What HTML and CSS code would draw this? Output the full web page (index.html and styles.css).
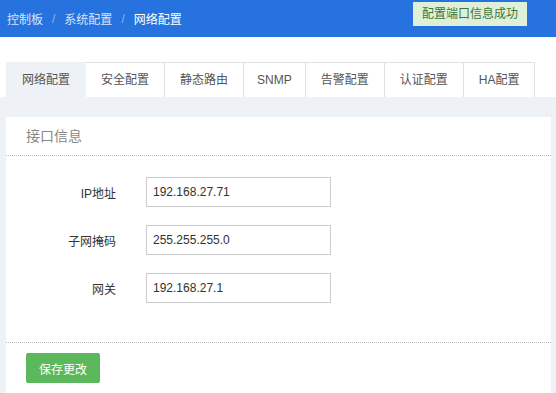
FILE: index.html
```
<!DOCTYPE html>
<html lang="zh-CN">
  <head>
    <meta charset="UTF-8" />
    <meta name="viewport" content="width=device-width, initial-scale=1" />
    <title>网络配置</title>
    <link rel="stylesheet" href="styles.css">
  </head>
  <body>
    <div class="topbar">
      <div class="breadcrumb">
        <span class="crumb">控制板</span>
        <span class="sep">/</span>
        <span class="crumb">系统配置</span>
        <span class="sep">/</span>
        <span class="crumb current">网络配置</span>
      </div>
      <div class="alert-ok">配置端口信息成功</div>
    </div>

    <div class="tabs">
      <div class="tab active">网络配置</div>
      <div class="tab">安全配置</div>
      <div class="tab">静态路由</div>
      <div class="tab tab-short">SNMP</div>
      <div class="tab">告警配置</div>
      <div class="tab">认证配置</div>
      <div class="tab">HA配置</div>
    </div>

    <div class="tab-content">
      <div class="panel">
        <div class="panel-title">接口信息</div>
        <div class="panel-body">
          <div class="form-row">
            <label for="ip">IP地址</label>
            <input type="text" id="ip" value="192.168.27.71" />
          </div>
          <div class="form-row">
            <label for="mask">子网掩码</label>
            <input type="text" id="mask" value="255.255.255.0" />
          </div>
          <div class="form-row">
            <label for="gw">网关</label>
            <input type="text" id="gw" value="192.168.27.1" />
          </div>
        </div>
        <div class="panel-footer">
          <button class="btn-save">保存更改</button>
        </div>
      </div>
    </div>
  </body>
</html>
```

FILE: styles.css
```
body {
  margin: 0;
  padding: 0;
  font-family: "Liberation Sans", "Noto Sans CJK SC", sans-serif;
  font-size: 12px;
  color: #333;
  background-color: #fff;
}

.topbar {
  height: 37px;
  background-color: #2672de;
  display: flex;
  align-items: center;
  padding: 0 7px;
}

.breadcrumb {
  display: flex;
  align-items: center;
  color: #d6e4fa;
  font-size: 12px;
}

.sep {
  color: #8fb3ee;
  margin: 0 9px;
}

.crumb.current {
  color: #fff;
}

.alert-ok {
  margin-left: auto;
  margin-right: 22px;
  margin-top: -10px;
  height: 24px;
  line-height: 24px;
  padding: 0 9px;
  background-color: #dff0d8;
  color: #3c763d;
  font-size: 12px;
}

.tabs {
  display: flex;
  margin: 25px 0 0 6px;
}

.tab {
  height: 34px;
  line-height: 34px;
  padding: 0 15px;
  border: 1px solid #e0e0e0;
  border-left: none;
  border-bottom: none;
  color: #555;
  background-color: #fff;
}

.tab-short {
  padding: 0 13px;
}

.tab:first-child {
  border-left: 1px solid #e0e0e0;
}

.tab.active {
  background-color: #eef1f5;
  border-color: #eef1f5;
}

.tab-content {
  background-color: #eef1f5;
  padding: 20px 5px 0 6px;
}

.panel {
  background-color: #fff;
  height: 276px;
}

.panel-title {
  height: 38px;
  line-height: 38px;
  padding-left: 20px;
  font-size: 14px;
  color: #888;
  border-bottom: 1px dotted #bbb;
}

.panel-body {
  padding: 21px 0 21px 0;
  border-bottom: 1px dotted #bbb;
}

.form-row {
  display: flex;
  align-items: center;
  margin-bottom: 18px;
}

.form-row label {
  width: 110px;
  text-align: right;
  margin-right: 30px;
  color: #333;
}

.form-row input {
  width: 185px;
  height: 30px;
  box-sizing: border-box;
  padding: 0 6px;
  border: 1px solid #ccc;
  font-family: "Liberation Sans", sans-serif;
  font-size: 12px;
  color: #333;
}

.panel-footer {
  padding: 10px 20px;
}

.btn-save {
  width: 74px;
  height: 30px;
  border: none;
  border-radius: 2px;
  background-color: #5cb85c;
  color: #fff;
  font-family: "Liberation Sans", "Noto Sans CJK SC", sans-serif;
  font-size: 12px;
  cursor: pointer;
}
```
